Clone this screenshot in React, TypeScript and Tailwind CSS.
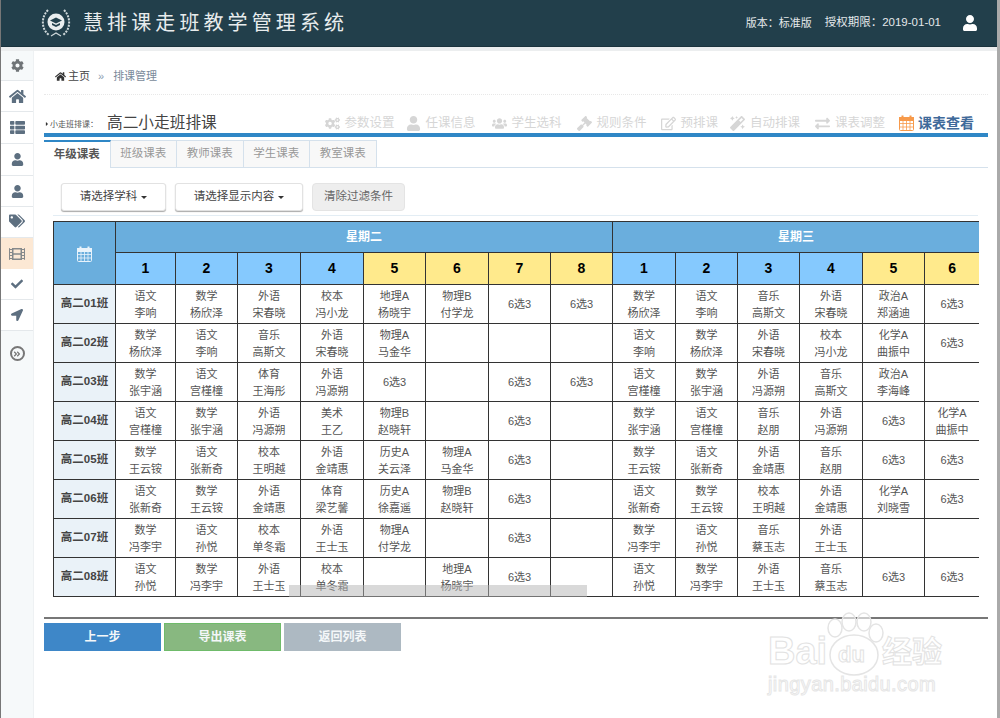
import {
  FaCog,
  FaCogs,
  FaHome,
  FaThList,
  FaUser,
  FaUsers,
  FaTags,
  FaFilm,
  FaCheck,
  FaLocationArrow,
  FaGavel,
  FaRegEdit,
  FaMagic,
  FaExchangeAlt,
  FaAngleDoubleRight,
  FaCaretRight,
} from "react-icons/fa";

const font = "font-['Liberation_Sans','Noto_Sans_CJK_SC',sans-serif]";

const colWidths = [62, 60, 62, 63, 63, 62, 63, 62, 62, 63, 62, 62, 63, 62, 55];
const periods = [1, 2, 3, 4, 5, 6, 7, 8, 1, 2, 3, 4, 5, 6];
const yellow = [4, 5, 6, 7, 12, 13];

const X = "6选3";
const rows: { name: string; cells: string[] }[] = [
  { name: "高二01班", cells: ["语文 李响", "数学 杨欣泽", "外语 宋春晓", "校本 冯小龙", "地理A 杨晓宇", "物理B 付学龙", X, X, "数学 杨欣泽", "语文 李响", "音乐 高斯文", "外语 宋春晓", "政治A 郑涵迪", X] },
  { name: "高二02班", cells: ["数学 杨欣泽", "语文 李响", "音乐 高斯文", "外语 宋春晓", "物理A 马金华", "", "", "", "语文 李响", "数学 杨欣泽", "外语 宋春晓", "校本 冯小龙", "化学A 曲振中", X] },
  { name: "高二03班", cells: ["数学 张宇涵", "语文 宫槿橦", "体育 王海彤", "外语 冯源朔", X, "", X, X, "语文 宫槿橦", "数学 张宇涵", "外语 冯源朔", "音乐 高斯文", "政治A 李海峰", ""] },
  { name: "高二04班", cells: ["语文 宫槿橦", "数学 张宇涵", "外语 冯源朔", "美术 王乙", "物理B 赵晓轩", "", X, "", "数学 张宇涵", "语文 宫槿橦", "音乐 赵朋", "外语 冯源朔", X, "化学A 曲振中"] },
  { name: "高二05班", cells: ["数学 王云铵", "语文 张新奇", "校本 王明越", "外语 金靖惠", "历史A 关云泽", "物理A 马金华", X, "", "数学 王云铵", "语文 张新奇", "外语 金靖惠", "音乐 赵朋", X, X] },
  { name: "高二06班", cells: ["语文 张新奇", "数学 王云铵", "外语 金靖惠", "体育 梁艺馨", "历史A 徐嘉遥", "物理B 赵晓轩", X, "", "语文 张新奇", "数学 王云铵", "校本 王明越", "外语 金靖惠", "化学A 刘晓雪", X] },
  { name: "高二07班", cells: ["数学 冯李宇", "语文 孙悦", "校本 单冬霜", "外语 王士玉", "物理A 付学龙", "", X, "", "数学 冯李宇", "语文 孙悦", "音乐 蔡玉志", "外语 王士玉", "", ""] },
  { name: "高二08班", cells: ["语文 孙悦", "数学 冯李宇", "外语 王士玉", "校本 单冬霜", "", "地理A 杨晓宇", X, "", "语文 孙悦", "数学 冯李宇", "外语 王士玉", "音乐 蔡玉志", X, X] },
];

const sideItems = [
  { icon: FaHome, h: "h-[31px]", size: 17 },
  { icon: FaThList, h: "h-[32px]", size: 15 },
  { icon: FaUser, h: "h-[32px]", size: 13 },
  { icon: FaUser, h: "h-[31px]", size: 13 },
  { icon: FaTags, h: "h-[31px] pb-[3px]", size: 16 },
];

const steps = [
  { icon: FaCogs, label: "参数设置", mr: "mr-[11px]" },
  { icon: FaUser, label: "任课信息", mr: "mr-[16px]" },
  { icon: FaUsers, label: "学生选科", mr: "mr-[15px]" },
  { icon: FaGavel, label: "规则条件", mr: "mr-[14px]" },
  { icon: FaRegEdit, label: "预排课", mr: "mr-[12px]" },
  { icon: FaMagic, label: "自动排课", mr: "mr-[15px]" },
  { icon: FaExchangeAlt, label: "课表调整", mr: "mr-[14px]" },
];

function Logo() {
  return (
    <svg width="32" height="32" viewBox="0 0 32 32" fill="none" className="shrink-0">
      <path d="M8 3 C1 10 1 22 9 28" stroke="#cfd8da" strokeWidth="2" strokeDasharray="2 1.2" />
      <path d="M24 3 C31 10 31 22 23 28" stroke="#cfd8da" strokeWidth="2" strokeDasharray="2 1.2" />
      <path d="M11 29 L16 26 L21 29" stroke="#cfd8da" strokeWidth="1.2" />
      <circle cx="16" cy="15" r="8.5" fill="#e9eeef" />
      <path d="M16 10.5 L22 13.5 L16 16.5 L10 13.5 Z" fill="#24424e" />
      <path d="M12 16 L16 18 L20 16 L20 18 L16 20 L12 18 Z" fill="#24424e" />
    </svg>
  );
}

function CalIcon({ className }: { className: string }) {
  return (
    <svg width="15" height="16" viewBox="0 0 15 16" fill="none" stroke="currentColor" className={className}>
      <rect x="0.5" y="2.5" width="14" height="13" rx="1" />
      <rect x="0.5" y="2.5" width="14" height="3" fill="currentColor" />
      <path d="M3.5 0.5 V4 M11.5 0.5 V4" strokeWidth="2" />
      <path d="M0.5 8.5 H14.5 M0.5 12 H14.5 M4 5.5 V15.5 M7.5 5.5 V15.5 M11 5.5 V15.5" strokeWidth="0.8" />
    </svg>
  );
}

function Watermark() {
  return (
    <div className="absolute left-[760px] top-[610px] w-[195px] h-[90px] pointer-events-none">
      <svg width="195" height="70" viewBox="0 0 195 70" fill="none" stroke="#e4e4e4" strokeWidth="1.5" className="absolute left-0 top-0">
        <ellipse cx="74" cy="18" rx="7" ry="9" fill="#ffffff" fillOpacity="0.6" />
        <ellipse cx="88" cy="12" rx="7" ry="9" fill="#ffffff" fillOpacity="0.6" />
        <ellipse cx="103" cy="12" rx="7" ry="9" fill="#ffffff" fillOpacity="0.6" />
        <ellipse cx="115" cy="23" rx="7" ry="9" fill="#ffffff" fillOpacity="0.6" />
        <ellipse cx="93" cy="45" rx="24" ry="20" fill="#ffffff" fillOpacity="0.6" />
      </svg>
      <span className="absolute left-[7px] top-[21px] text-[38px] leading-[40px] font-bold text-white [-webkit-text-stroke:1px_#e2e2e2]">Bai</span>
      <span className="absolute left-[77px] top-[32px] text-[22px] leading-[26px] font-bold text-white [-webkit-text-stroke:1px_#e2e2e2]">du</span>
      <span className="absolute left-[121px] top-[24px] text-[30px] leading-[36px] font-bold text-white [-webkit-text-stroke:1px_#e2e2e2]">经验</span>
      <span className="absolute left-[7px] top-[62px] text-[20px] leading-[24px] tracking-[0.4px] text-white [-webkit-text-stroke:1px_#e6e6e6]">jingyan.baidu.com</span>
    </div>
  );
}

function Cell({ text }: { text: string }) {
  const [subject, teacher] = text.split(" ");
  return (
    <td className="border border-[#333] p-0 pt-[1px] text-center align-middle text-[11px] leading-[17px] text-[#555]">
      <div>{subject}</div>
      {teacher && <div>{teacher}</div>}
    </td>
  );
}

export default function App() {
  return (
    <div className={`${font} relative h-[718px] w-[1000px] overflow-hidden bg-white border-l border-l-[#777] border-r-[3px] border-r-[#aaa] flex flex-col`}>
      {/* Header */}
      <div className="h-[47px] shrink-0 bg-[#223f4b] flex items-center pl-[39px] pr-[19px] border-b border-[#1b333d]">
        <Logo />
        <div className="ml-[11px] text-[20px] tracking-[4.1px] text-[#e8eced]">慧排课走班教学管理系统</div>
        <div className="ml-auto text-[11px] text-[#e4e8ea]">版本：标准版</div>
        <div className="ml-[13px] text-[11.5px] text-[#e4e8ea]">授权期限：2019-01-01</div>
        <FaUser size={16} className="ml-[21px] text-white" />
      </div>
      <div className="h-[4px] shrink-0 bg-[#eceeef]" />

      <div className="flex-1 flex min-h-0">
        {/* Sidebar */}
        <div className="w-[33px] shrink-0 bg-[#f6f9fa] border-r border-[#eef1f3] flex flex-col">
          <div className="h-[30px] shrink-0 flex items-center justify-center border-b border-[#e4e8eb]">
            <FaCog size={13} className="text-[#6f7477]" />
          </div>
          {sideItems.map((item, i) => {
            const Icon = item.icon;
            return (
              <div key={i} className={`${item.h} shrink-0 flex items-center justify-center border-b border-[#e4e8eb] bg-white text-[#5d6f80]`}>
                <Icon size={item.size} />
              </div>
            );
          })}
          <div className="h-[31px] shrink-0 flex items-center justify-center bg-[#fce8d4]">
            <FaFilm size={16} className="text-[#85898b]" />
          </div>
          <div className="h-[31px] shrink-0 flex items-center justify-center border-b border-[#e4e8eb] bg-white text-[#5d6f80]">
            <FaCheck size={12} />
          </div>
          <div className="h-[31px] shrink-0 flex items-center justify-center border-b border-[#e4e8eb] bg-white text-[#5d6f80]">
            <FaLocationArrow size={12} />
          </div>
          <div className="flex justify-center pt-[15px]">
            <div className="w-[15px] h-[15px] rounded-full border-2 border-[#777] flex items-center justify-center text-[#777]">
              <FaAngleDoubleRight size={8} />
            </div>
          </div>
        </div>

        {/* Main */}
        <div className="flex-1 min-w-0 pl-[10px] pr-[9px]">
          <div className="h-[44px] flex items-center pl-[11px] pt-[7px] border-b border-dotted border-[#e8e8e8] text-[11px]">
            <FaHome size={11} className="text-[#333]" />
            <span className="ml-[2px] text-[#444]">主页</span>
            <span className="ml-[8px] text-[#8a9bb0]">»</span>
            <span className="ml-[9px] text-[#7a8a9a]">排课管理</span>
          </div>

          <div className="h-[38px] flex items-end">
            <FaCaretRight size={6} className="mb-[6px] text-[#333]" />
            <span className="mb-[2px] text-[8px] text-[#555]">小走班排课：</span>
            <span className="ml-[9px] text-[15.7px] leading-[20px] text-[#444]">高二小走班排课</span>
            <div className="ml-auto flex items-center text-[#d6d6d6] text-[12.5px] leading-[20px]">
              {steps.map((s) => {
                const Icon = s.icon;
                return (
                  <div key={s.label} className={`flex items-center ${s.mr}`}>
                    <span className="w-[16px] flex justify-center mr-[4px]">
                      <Icon size={15} />
                    </span>
                    <span>{s.label}</span>
                  </div>
                );
              })}
              <CalIcon className="mr-[4px] text-[#f79a4b]" />
              <span className="mr-[14px] text-[14px] font-bold text-[#3f6a9a]">课表查看</span>
            </div>
          </div>
          <div className="h-[4px] bg-[#2f87c6]" />

          {/* Tabs */}
          <div className="mt-[3px] h-[28px] flex border-b border-[#d5e1ec] text-[11.5px]">
            <div className="w-[66.5px] h-[28px] bg-white border-t-2 border-t-[#2f87c6] border-r border-r-[#d5e1ec] font-bold text-[#555] flex items-center justify-center">年级课表</div>
            {["班级课表", "教师课表", "学生课表", "教室课表"].map((t) => (
              <div key={t} className="w-[66.5px] h-[27px] bg-[#f8f8f8] border-t border-r border-[#d5e1ec] text-[#999] flex items-center justify-center">{t}</div>
            ))}
          </div>

          {/* Filters */}
          <div className="mt-[15px] ml-[9px] mr-[10px] pl-[8px] h-[33px] border-b border-[#e3edf4] flex items-start gap-[9px] text-[11.5px]">
            <button className="w-[105px] h-[28px] bg-white rounded-[3px] border border-[#e2e2e2] shadow-[0_1px_1px_#aaa] text-[#444] flex items-center justify-center">
              请选择学科
              <span className="ml-[4px] border-x-[3px] border-x-transparent border-t-[3px] border-t-[#333]" />
            </button>
            <button className="w-[128px] h-[28px] bg-white rounded-[3px] border border-[#e2e2e2] shadow-[0_1px_1px_#aaa] text-[#444] flex items-center justify-center">
              请选择显示内容
              <span className="ml-[4px] border-x-[3px] border-x-transparent border-t-[3px] border-t-[#333]" />
            </button>
            <button className="w-[93px] h-[28px] bg-[#eeeeee] rounded-[4px] border border-[#e4e4e4] text-[#666] flex items-center justify-center">清除过滤条件</button>
          </div>

          {/* Timetable */}
          <div className="relative mt-[5px] ml-[9px] w-[926px] overflow-hidden">
            <table className="table-fixed border-collapse w-[926px]">
              <colgroup>
                {colWidths.map((w, i) => (
                  <col key={i} style={{ width: w }} />
                ))}
              </colgroup>
              <thead>
                <tr className="h-[31px]">
                  <th rowSpan={2} className="border border-[#333] bg-[#6aaedd] text-center">
                    <CalIcon className="inline text-[#e8f3fb]" />
                  </th>
                  <th colSpan={8} className="border border-[#333] bg-[#6aaedd] text-[12px] font-bold text-white">星期二</th>
                  <th colSpan={6} className="border border-[#333] bg-[#6aaedd] text-[12px] font-bold text-white">星期三</th>
                </tr>
                <tr className="h-[32px]">
                  {periods.map((p, i) => (
                    <th key={i} className={`border border-[#333] text-[14px] font-bold text-black ${yellow.includes(i) ? "bg-[#ffea8c]" : "bg-[#85c9fe]"}`}>{p}</th>
                  ))}
                </tr>
              </thead>
              <tbody>
                {rows.map((r) => (
                  <tr key={r.name} className="h-[39px]">
                    <td className="border border-[#333] bg-[#eaf2f8] text-center text-[11.5px] font-bold text-[#444]">{r.name}</td>
                    {r.cells.map((c, i) => (
                      <Cell key={i} text={c} />
                    ))}
                  </tr>
                ))}
              </tbody>
            </table>
            <div className="absolute left-[236px] bottom-0 w-[298px] h-[12px] bg-[#b4b4b4]/50" />
          </div>

          <div className="mt-[20px] h-[2px] bg-[#777]" />

          <div className="mt-[4px] flex gap-[3px] text-[12px] font-bold text-[#f4f7f9]">
            <div className="w-[117px] h-[28px] bg-[#3e87c8] flex items-center justify-center">上一步</div>
            <div className="w-[117px] h-[28px] bg-[#88b880] border border-[#6fbb6a] flex items-center justify-center">导出课表</div>
            <div className="w-[117px] h-[28px] bg-[#adb9c2] flex items-center justify-center">返回列表</div>
          </div>
        </div>
      </div>
      <Watermark />
    </div>
  );
}
